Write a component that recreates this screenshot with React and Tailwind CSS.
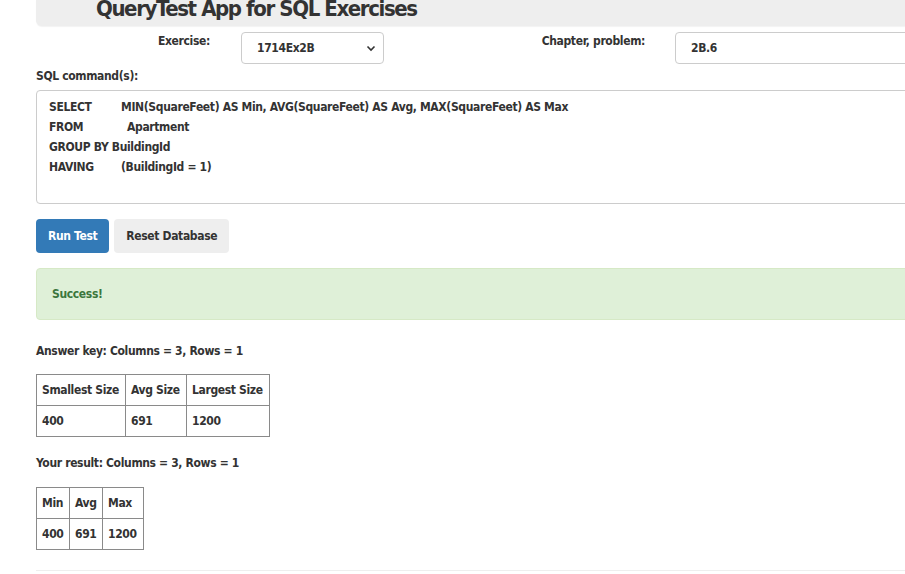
import React from "react";

const FONT = { fontFamily: '"DejaVu Sans Condensed", "Liberation Sans", sans-serif' };

function ResultTable({ headers, row, widths }) {
  return (
    <table className="border-collapse border border-[#8a8a8a] text-[12px] text-[#333]">
      <thead>
        <tr>
          {headers.map((h, i) => (
            <th key={h} className="border border-[#8a8a8a] h-[31px] px-[5px] text-left font-bold whitespace-nowrap" style={{ width: widths[i] }}>
              {h}
            </th>
          ))}
        </tr>
      </thead>
      <tbody>
        <tr>
          {row.map((c, i) => (
            <td key={i} className="border border-[#8a8a8a] h-[31px] px-[5px] font-bold">
              {c}
            </td>
          ))}
        </tr>
      </tbody>
    </table>
  );
}

export default function App() {
  return (
    <div className="w-screen h-screen overflow-hidden bg-white text-[#333] font-bold tracking-[-0.35px]" style={FONT}>
      <div className="w-[1140px] ml-9">
        {/* header */}
        <div className="h-[26px] bg-[#eeeeee] rounded-bl-md overflow-hidden shadow-[0_1px_1px_rgba(0,0,0,0.05)]">
          <h1 className="text-[22px] leading-[22px] font-bold text-[#333] pl-[60px] -mt-[2px] tracking-[-1.4px]">
            QueryTest App for SQL Exercises
          </h1>
        </div>

        {/* exercise row */}
        <div className="flex items-start mt-[6px] h-[32px]">
          <label className="w-[205px] text-right pr-[31px] text-[12px] leading-[18px]">Exercise:</label>
          <div className="w-[143px] h-[32px] border border-[#cccccc] rounded flex items-center justify-between pl-[15px] pr-[7px] text-[12px]">
            <span>1714Ex2B</span>
            <svg width="10" height="10" viewBox="0 0 10 10" fill="none" stroke="#333" strokeWidth="1.6">
              <path d="M1.5 3.5 L5 7 L8.5 3.5" />
            </svg>
          </div>
          <label className="w-[291px] text-right pr-[30px] text-[12px] leading-[18px]">Chapter, problem:</label>
          <div className="flex-1 h-[32px] border border-[#cccccc] rounded flex items-center pl-[15px] text-[12px]">
            2B.6
          </div>
        </div>

        <div className="text-[12px] mt-[2px] h-[20px] leading-[20px]">SQL command(s):</div>

        {/* textarea */}
        <div className="mt-[4px] h-[114px] border border-[#cccccc] rounded pl-[12px] pt-[6px] text-[12px] leading-[20px]">
          <div className="flex">
            <span className="w-[72px] shrink-0">SELECT</span>
            <span>MIN(SquareFeet) AS Min, AVG(SquareFeet) AS Avg, MAX(SquareFeet) AS Max</span>
          </div>
          <div className="flex">
            <span className="w-[78px] shrink-0">FROM</span>
            <span>Apartment</span>
          </div>
          <div>GROUP BY BuildingId</div>
          <div className="flex">
            <span className="w-[72px] shrink-0">HAVING</span>
            <span>(BuildingId = 1)</span>
          </div>
        </div>

        {/* buttons */}
        <div className="flex gap-[5px] mt-[15px]">
          <button className="h-[34px] px-[12px] rounded bg-[#337ab7] text-white text-[12px] font-bold tracking-[-0.35px]">Run Test</button>
          <button className="h-[34px] px-[12px] rounded bg-[#eeeeee] text-[#333] text-[12px] font-bold tracking-[-0.35px]">Reset Database</button>
        </div>

        {/* alert */}
        <div className="mt-[15px] h-[52px] rounded bg-[#dff0d8] border border-[#d6e9c6] text-[#3c763d] text-[12px] flex items-center pl-[15px]">
          Success!
        </div>

        <div className="text-[12px] mt-[22px] leading-[18px]">Answer key: Columns = 3, Rows = 1</div>
        <div className="mt-[14px]">
          <ResultTable headers={["Smallest Size", "Avg Size", "Largest Size"]} row={["400", "691", "1200"]} widths={[89, 61, 83]} />
        </div>

        <div className="text-[12px] mt-[17px] leading-[18px]">Your result: Columns = 3, Rows = 1</div>
        <div className="mt-[15px]">
          <ResultTable headers={["Min", "Avg", "Max"]} row={["400", "691", "1200"]} widths={[33, 33, 41]} />
        </div>

        <div className="mt-[20px] border-t border-[#eeeeee]" />
      </div>
    </div>
  );
}
